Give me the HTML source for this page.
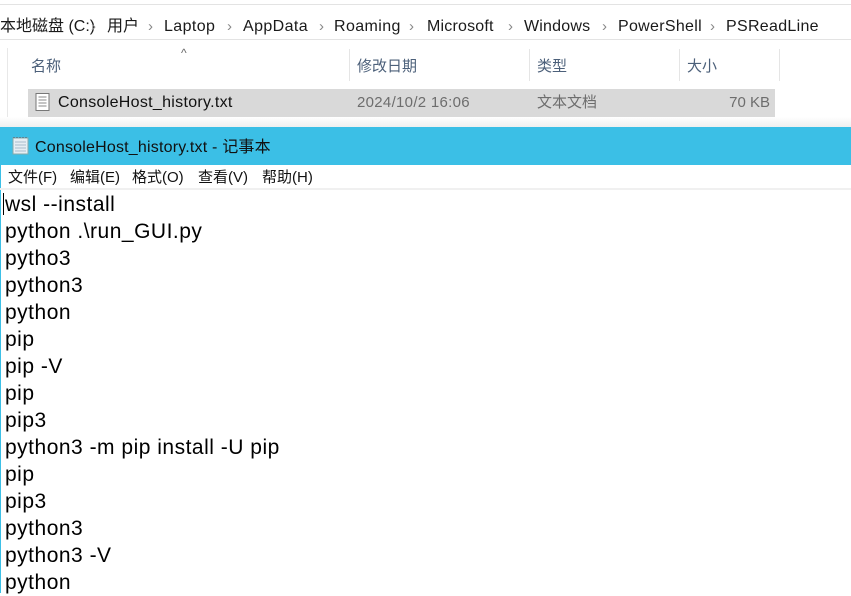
<!DOCTYPE html>
<html><head><meta charset="utf-8"><style>
*{margin:0;padding:0;box-sizing:border-box}
body{width:851px;height:593px;overflow:hidden;background:#fff;font-family:"Liberation Sans","Noto Sans CJK SC",sans-serif;position:relative}
.a{position:absolute;white-space:nowrap;line-height:20px}
.b{position:absolute;top:17px;font-size:16px;color:#1a1a1a;line-height:20px;white-space:nowrap}
.c{position:absolute;top:17px;font-size:15px;color:#888;line-height:20px}
.m{position:absolute;top:169px;font-size:15px;color:#111;line-height:18px;white-space:nowrap}
</style></head><body>
<div class="a" style="left:0;top:4px;width:851px;height:1px;background:#e3e3e3"></div>
<div class="a" style="left:0;top:39px;width:851px;height:1px;background:#e3e3e3"></div>
<div class="b" style="left:0">本地磁盘 (C:)</div><div class="c" style="left:91px">›</div>
<div class="b" style="left:107px">用户</div><div class="c" style="left:148px">›</div>
<div class="b" style="left:164px;letter-spacing:0.4px">Laptop</div><div class="c" style="left:227px">›</div>
<div class="b" style="left:243px;letter-spacing:0.4px">AppData</div><div class="c" style="left:319px">›</div>
<div class="b" style="left:334px;letter-spacing:0.4px">Roaming</div><div class="c" style="left:409px">›</div>
<div class="b" style="left:427px;letter-spacing:0.2px">Microsoft</div><div class="c" style="left:508px">›</div>
<div class="b" style="left:524px;letter-spacing:0.2px">Windows</div><div class="c" style="left:602px">›</div>
<div class="b" style="left:618px;letter-spacing:0.3px">PowerShell</div><div class="c" style="left:710px">›</div>
<div class="b" style="left:726px;letter-spacing:0.3px">PSReadLine</div>
<div class="a" style="left:7px;top:48px;width:1px;height:70px;background:#e8e8e8"></div>
<div class="a" style="left:181px;top:43px;font-size:12px;color:#666">^</div>
<div class="a" style="left:31px;top:57px;font-size:15px;color:#4c607a">名称</div>
<div class="a" style="left:349px;top:49px;width:1px;height:32px;background:#e5e5e5"></div>
<div class="a" style="left:357px;top:57px;font-size:15px;color:#4c607a">修改日期</div>
<div class="a" style="left:529px;top:49px;width:1px;height:32px;background:#e5e5e5"></div>
<div class="a" style="left:537px;top:57px;font-size:15px;color:#4c607a">类型</div>
<div class="a" style="left:679px;top:49px;width:1px;height:32px;background:#e5e5e5"></div>
<div class="a" style="left:687px;top:57px;font-size:15px;color:#4c607a">大小</div>
<div class="a" style="left:779px;top:49px;width:1px;height:32px;background:#e5e5e5"></div>
<div class="a" style="left:28px;top:89px;width:747px;height:28px;background:#d9d9d9"></div>
<svg class="a" style="left:35px;top:93px" width="16" height="19"><rect x="1" y="0.5" width="13" height="17" fill="#fff" stroke="#777"/><path d="M3.5 4h8M3.5 7h8M3.5 10h8M3.5 13h8" stroke="#888"/></svg>
<div class="a" style="left:58px;top:93px;font-size:16px;color:#111;letter-spacing:0.3px">ConsoleHost_history.txt</div>
<div class="a" style="left:357px;top:93px;font-size:15px;color:#6d6d6d;letter-spacing:0.3px">2024/10/2 16:06</div>
<div class="a" style="left:537px;top:93px;font-size:15px;color:#6d6d6d">文本文档</div>
<div class="a" style="left:700px;top:93px;width:70px;text-align:right;font-size:15px;color:#6d6d6d">70 KB</div>
<div class="a" style="left:0;top:117px;width:851px;height:10px;background:linear-gradient(#fff,#f0f0f0)"></div>
<div class="a" style="left:0;top:127px;width:851px;height:38px;background:#3bbfe6"></div>
<svg class="a" style="left:11px;top:136px" width="20" height="20"><rect x="2" y="2" width="15" height="16" fill="#e6eef4" stroke="#8aa"/><path d="M4 6h11M4 9h11M4 12h11M4 15h11" stroke="#a8bccc"/><path d="M3 2v-1M6 2v-1M9 2v-1M12 2v-1M15 2v-1" stroke="#556"/></svg>
<div class="a" style="left:35px;top:138px;font-size:16px;color:#111;letter-spacing:0.2px">ConsoleHost_history.txt - 记事本</div>
<div class="a" style="left:0;top:165px;width:1px;height:428px;background:#3bbfe6"></div>
<div class="m" style="left:8px">文件(F)</div>
<div class="m" style="left:70px">编辑(E)</div>
<div class="m" style="left:132px">格式(O)</div>
<div class="m" style="left:198px">查看(V)</div>
<div class="m" style="left:262px">帮助(H)</div>
<div class="a" style="left:0;top:188px;width:851px;height:2px;background:#f0f0f0"></div>
<div class="a" style="left:3px;top:193px;width:1px;height:22px;background:#000"></div>
<div class="a" style="left:5px;top:191px;font-size:21px;line-height:27px;color:#000;letter-spacing:0.5px">wsl --install<br>python .\run_GUI.py<br>pytho3<br>python3<br>python<br>pip<br>pip -V<br>pip<br>pip3<br>python3 -m pip install -U pip<br>pip<br>pip3<br>python3<br>python3 -V<br>python</div>
</body></html>
